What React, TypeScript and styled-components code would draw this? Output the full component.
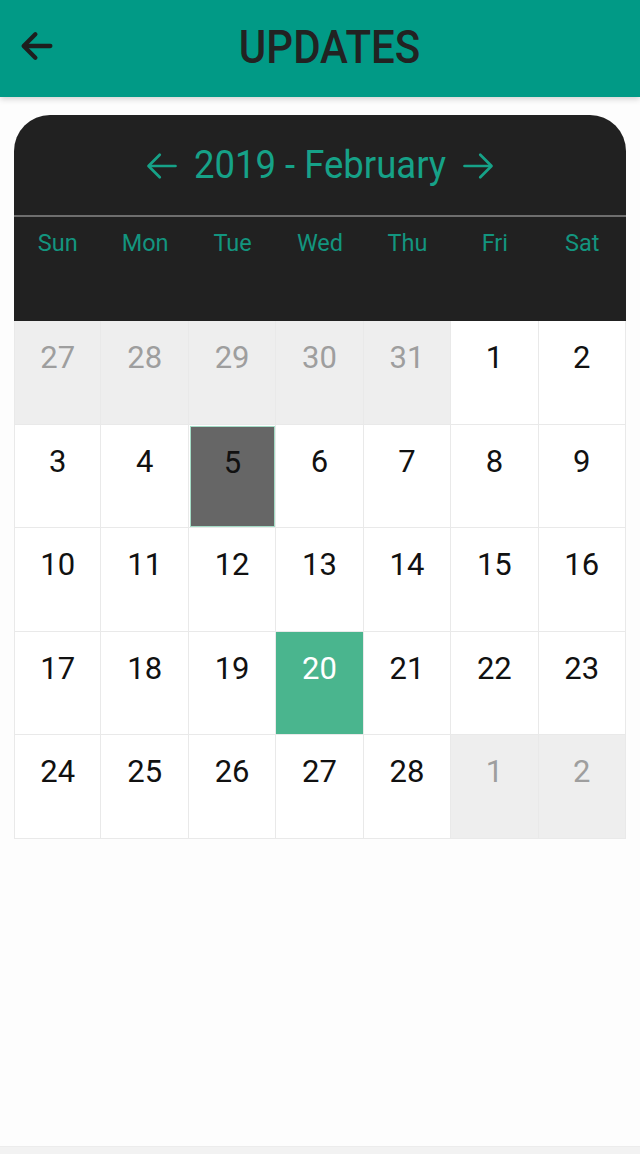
import styled, { createGlobalStyle } from 'styled-components';

const GlobalStyle = createGlobalStyle`
  html, body {
    margin: 0;
    padding: 0;
    background: #fdfdfd;
    font-family: Roboto, "Noto Sans", sans-serif;
  }
`;

type Day = { n: number; muted?: boolean; selected?: boolean; today?: boolean };

const weekDays = ['Sun', 'Mon', 'Tue', 'Wed', 'Thu', 'Fri', 'Sat'];

const buildDays = (): Day[] => {
  const days: Day[] = [27, 28, 29, 30, 31].map((n) => ({ n, muted: true }));
  for (let n = 1; n <= 28; n++) {
    days.push({ n, selected: n === 5, today: n === 20 });
  }
  days.push({ n: 1, muted: true }, { n: 2, muted: true });
  return days;
};

const ArrowIcon = ({ dir, color, width }: { dir: 'left' | 'right'; color: string; width: number }) => (
  <svg width="36" height="36" viewBox="0 0 24 24" fill="none" stroke={color} strokeWidth={width} strokeLinecap="round" strokeLinejoin="round"
    style={{ transform: dir === 'right' ? 'scaleX(-1)' : undefined }}>
    <path d="M21 12H3.5" />
    <path d="M10.5 4.5L3 12L10.5 19.5" />
  </svg>
);

const App = () => {
  const days = buildDays();
  return (
    <Page>
      <GlobalStyle />
      <TopBar>
        <BackButton>
          <svg width="40" height="40" viewBox="0 0 24 24" fill="none" stroke="#1e1e1e" strokeWidth="2.6" strokeLinecap="round" strokeLinejoin="round">
            <path d="M20 12H4.5" />
            <path d="M11 5L4 12L11 19" />
          </svg>
        </BackButton>
        <Title>UPDATES</Title>
      </TopBar>

      <Card>
        <MonthRow>
          <ArrowIcon dir="left" color="#16a288" width={1.8} />
          <MonthLabel>2019 - February</MonthLabel>
          <ArrowIcon dir="right" color="#16a288" width={1.8} />
        </MonthRow>
        <WeekRow>
          {weekDays.map((d) => (
            <WeekDay key={d}>{d}</WeekDay>
          ))}
        </WeekRow>
        <Grid>
          {days.map((d, i) => (
            <Cell key={i} $muted={d.muted} $firstCol={i % 7 === 0}>
              {d.selected || d.today ? (
                <Marker $today={d.today}>{d.n}</Marker>
              ) : (
                <Num $muted={d.muted}>{d.n}</Num>
              )}
            </Cell>
          ))}
        </Grid>
      </Card>
      <Bottom />
    </Page>
  );
};

const Page = styled.div`
  min-height: 1154px;
  display: flex;
  flex-direction: column;
`;

const TopBar = styled.header`
  height: 97px;
  background: #019a86;
  box-shadow: 0 2px 6px rgba(0, 0, 0, 0.18);
  display: flex;
  align-items: center;
  justify-content: center;
  padding-left: 19px;
  position: relative;
`;

const BackButton = styled.div`
  position: absolute;
  left: 17px;
  top: 26px;
  width: 40px;
  height: 40px;
`;

const Title = styled.h1`
  margin: 0;
  margin-top: -4px;
  font-size: 42px;
  font-weight: 500;
  color: #222;
  transform: scaleY(1.12);
`;

const Card = styled.section`
  margin: 18px 14px 0;
  background: #212121;
  border-radius: 36px 36px 0 0;
  overflow: hidden;
`;

const MonthRow = styled.div`
  height: 102px;
  display: flex;
  align-items: center;
  justify-content: center;
  gap: 14px;
  border-bottom: 2px solid #6e6e6e;
  padding-top: 2px;
  box-sizing: border-box;
`;

const MonthLabel = styled.span`
  font-size: 36.5px;
  color: #16a288;
  margin-top: -3px;
  transform: scaleY(1.08);
`;

const WeekRow = styled.div`
  display: grid;
  grid-template-columns: repeat(7, 1fr);
  height: 104px;
`;

const WeekDay = styled.div`
  text-align: center;
  padding-top: 12px;
  font-size: 23.5px;
  color: #13957f;
`;

const Grid = styled.div`
  display: grid;
  grid-template-columns: repeat(7, 1fr);
  grid-auto-rows: 103.5px;
  background: #fff;
`;

const Cell = styled.div<{ $muted?: boolean; $firstCol?: boolean }>`
  box-sizing: border-box;
  border-right: 1px solid #e9e9e9;
  border-bottom: 1px solid #e9e9e9;
  border-left: ${(p) => (p.$firstCol ? '1px solid #e9e9e9' : 'none')};
  background: ${(p) => (p.$muted ? '#eeeeee' : '#ffffff')};
  display: flex;
  flex-direction: column;
  align-items: stretch;
`;

const Num = styled.span<{ $muted?: boolean }>`
  display: block;
  text-align: center;
  padding-top: 18px;
  font-size: 31px;
  color: ${(p) => (p.$muted ? '#9e9e9e' : '#111')};
`;

const Marker = styled.span<{ $today?: boolean }>`
  flex: 1;
  margin: ${(p) => (p.$today ? '0' : '1px 0 0 1px')};
  text-align: center;
  padding-top: ${(p) => (p.$today ? '18px' : '17px')};
  font-size: 31px;
  background: ${(p) => (p.$today ? '#4ab58e' : '#666666')};
  color: ${(p) => (p.$today ? '#ffffff' : '#111')};
  border: ${(p) => (p.$today ? 'none' : '1.5px solid #a4dcc6')};
`;

const Bottom = styled.div`
  margin-top: auto;
  height: 7px;
  border-top: 1px solid #ececec;
  background: #f2f2f2;
`;

export default App;
